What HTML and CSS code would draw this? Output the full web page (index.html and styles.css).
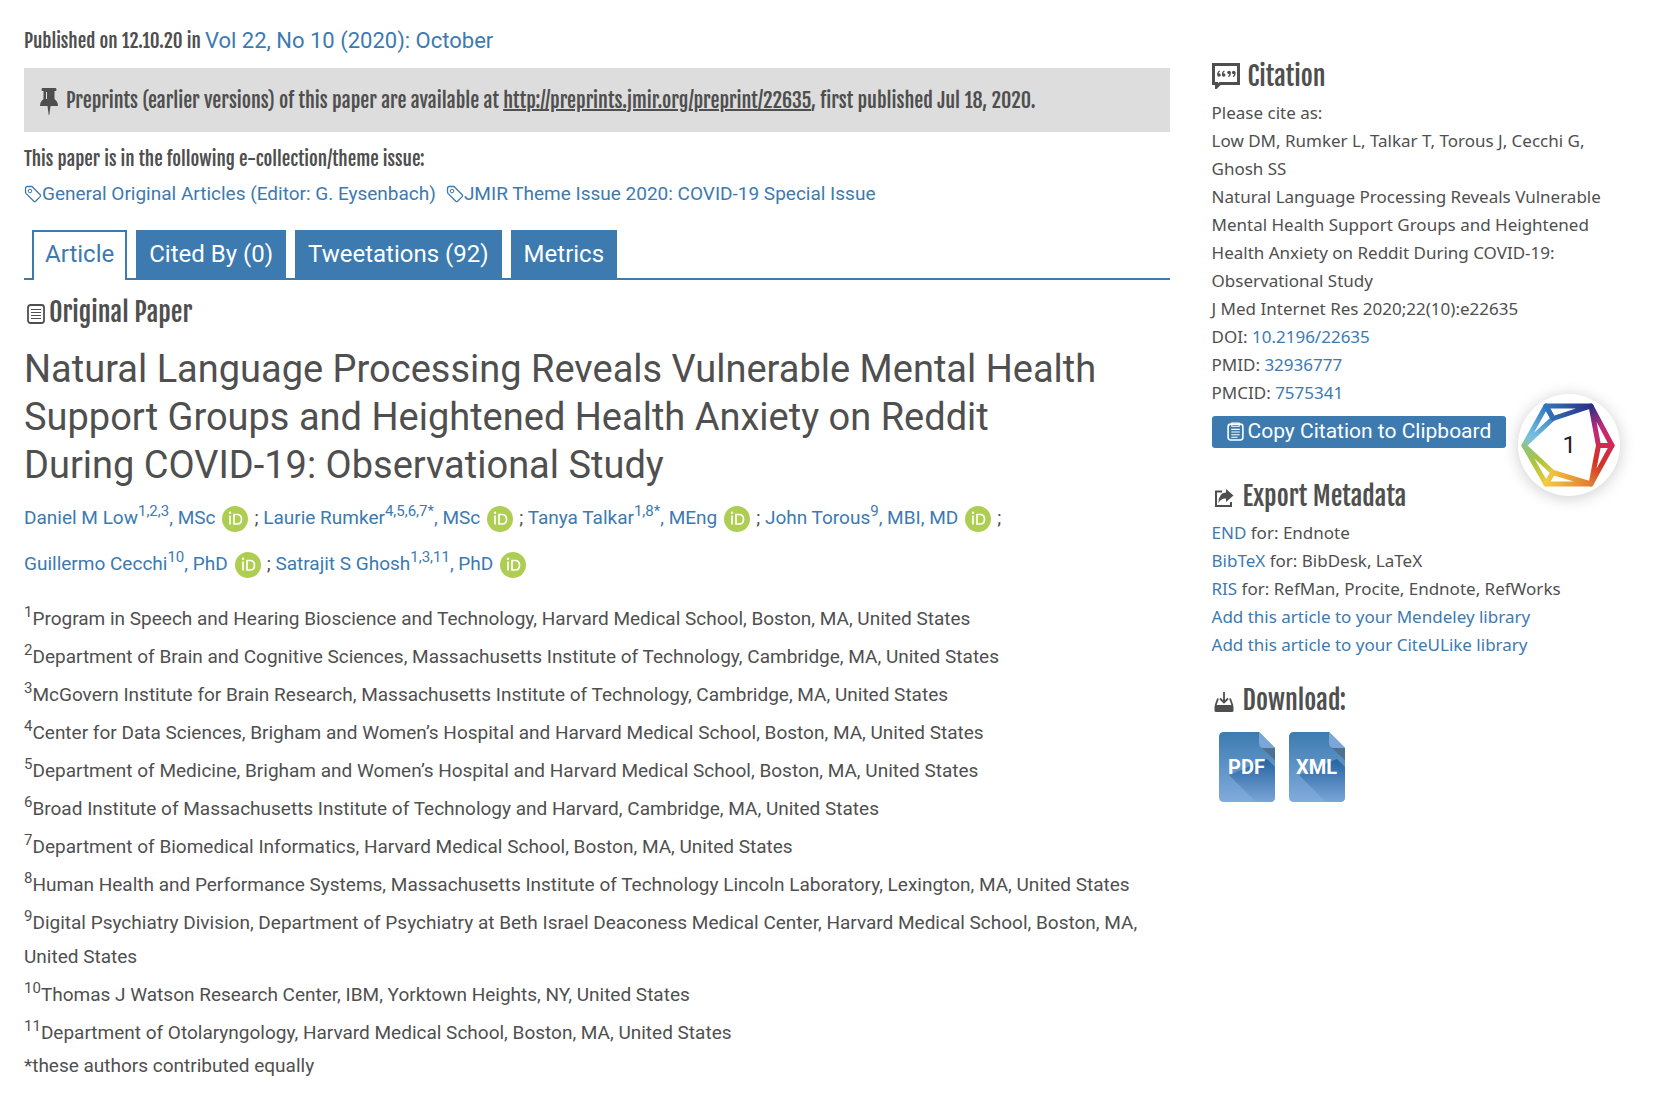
FILE: index.html
```html
<!DOCTYPE html>
<html lang="en">
<head>
<meta charset="utf-8">
<title>Natural Language Processing Reveals Vulnerable Mental Health Support Groups</title>
<link rel="stylesheet" href="styles.css">
</head>
<body>
<svg class="defs" width="0" height="0" aria-hidden="true">
  <symbol id="tag" viewBox="0 0 18 18">
    <path d="M1.500 6.500V3.500Q1.500 1.500 3.500 1.500H8L16.200 9.800Q17 10.700 16.200 11.600L11.600 16.200Q10.700 17 9.800 16.200L2.200 8.600Q1.500 7.800 1.500 6.500Z" fill="none" stroke="currentColor" stroke-width="1.300"/>
    <circle cx="6" cy="6" r="1.800" fill="none" stroke="currentColor"/>
  </symbol>
  <symbol id="paper" viewBox="0 0 18 20">
    <rect x="1" y="1" width="16" height="18" rx="2.500" fill="none" stroke="currentColor" stroke-width="1.800"/>
    <path d="M4 5.500H14M4 8.500H14M4 11.500H14M4 14.500H14" stroke="currentColor" stroke-width="1.200"/>
  </symbol>
  <symbol id="orcid" viewBox="0 0 26 26">
    <circle cx="13" cy="13" r="13" fill="#aecd53"/>
    <path d="M8 9.500V18.500M12 8.500H15Q19.500 8.500 19.500 13.200Q19.500 18 15 18H12Z" fill="none" stroke="#fff" stroke-width="1.700"/>
    <circle cx="8" cy="6.800" r="1.200" fill="#fff"/>
  </symbol>
</svg>
<div class="page">
  <main class="main">
    <p class="published">Published on 12.10.20 in <a href="#">Vol 22, No 10 (2020): October</a></p>
    <div class="preprint">
      <svg class="pin" viewBox="0 0 18 27" aria-hidden="true"><path d="M2.500 0H15.500Q16.500 0 16.500 1.500T15.500 3H14.500V11Q18 13.500 18 18H0Q0 13.500 3.500 11V3H2.500Q1.500 3 1.500 1.500T2.500 0Z" fill="currentColor"/><path d="M7.500 18H10.500L9.300 27H8.700Z" fill="currentColor"/><path d="M6.500 4V11" stroke="#ddd"/></svg>
      <p>Preprints (earlier versions) of this paper are available at <a href="#">http://preprints.jmir.org/preprint/22635</a>, first published Jul 18, 2020.</p>
    </div>
    <p class="collection-label">This paper is in the following e-collection/theme issue:</p>
    <div class="collections">
      <a href="#"><svg class="tag"><use href="#tag"/></svg>General Original Articles (Editor: G. Eysenbach)</a>
      <a href="#"><svg class="tag"><use href="#tag"/></svg>JMIR Theme Issue 2020: COVID-19 Special Issue</a>
    </div>
    <nav class="tabs">
      <a class="tab active" href="#">Article</a>
      <a class="tab" href="#">Cited By (0)</a>
      <a class="tab" href="#">Tweetations (92)</a>
      <a class="tab" href="#">Metrics</a>
    </nav>
    <h2 class="kind"><svg class="paper"><use href="#paper"/></svg>Original Paper</h2>
    <h1>Natural Language Processing Reveals Vulnerable Mental Health Support Groups and Heightened Health Anxiety on Reddit During COVID-19: Observational Study</h1>
    <p class="authors">
      <span class="author"><a href="#">Daniel M Low<sup>1,2,3</sup>, MSc</a><a class="orcid" href="#" aria-label="ORCID"><svg><use href="#orcid"/></svg></a>;</span>
      <span class="author"><a href="#">Laurie Rumker<sup>4,5,6,7*</sup>, MSc</a><a class="orcid" href="#" aria-label="ORCID"><svg><use href="#orcid"/></svg></a>;</span>
      <span class="author"><a href="#">Tanya Talkar<sup>1,8*</sup>, MEng</a><a class="orcid" href="#" aria-label="ORCID"><svg><use href="#orcid"/></svg></a>;</span>
      <span class="author"><a href="#">John Torous<sup>9</sup>, MBI, MD</a><a class="orcid" href="#" aria-label="ORCID"><svg><use href="#orcid"/></svg></a>;</span>
      <span class="author"><a href="#">Guillermo Cecchi<sup>10</sup>, PhD</a><a class="orcid" href="#" aria-label="ORCID"><svg><use href="#orcid"/></svg></a>;</span>
      <span class="author"><a href="#">Satrajit S Ghosh<sup>1,3,11</sup>, PhD</a><a class="orcid" href="#" aria-label="ORCID"><svg><use href="#orcid"/></svg></a></span>
    </p>
    <ul class="affiliations">
      <li><sup>1</sup>Program in Speech and Hearing Bioscience and Technology, Harvard Medical School, Boston, MA, United States</li>
      <li><sup>2</sup>Department of Brain and Cognitive Sciences, Massachusetts Institute of Technology, Cambridge, MA, United States</li>
      <li><sup>3</sup>McGovern Institute for Brain Research, Massachusetts Institute of Technology, Cambridge, MA, United States</li>
      <li><sup>4</sup>Center for Data Sciences, Brigham and Women’s Hospital and Harvard Medical School, Boston, MA, United States</li>
      <li><sup>5</sup>Department of Medicine, Brigham and Women’s Hospital and Harvard Medical School, Boston, MA, United States</li>
      <li><sup>6</sup>Broad Institute of Massachusetts Institute of Technology and Harvard, Cambridge, MA, United States</li>
      <li><sup>7</sup>Department of Biomedical Informatics, Harvard Medical School, Boston, MA, United States</li>
      <li><sup>8</sup>Human Health and Performance Systems, Massachusetts Institute of Technology Lincoln Laboratory, Lexington, MA, United States</li>
      <li><sup>9</sup>Digital Psychiatry Division, Department of Psychiatry at Beth Israel Deaconess Medical Center, Harvard Medical School, Boston, MA, United States</li>
      <li><sup>10</sup>Thomas J Watson Research Center, IBM, Yorktown Heights, NY, United States</li>
      <li><sup>11</sup>Department of Otolaryngology, Harvard Medical School, Boston, MA, United States</li>
    </ul>
    <p class="note">*these authors contributed equally</p>
  </main>
  <aside class="side">
    <section>
      <h2><svg class="quote" viewBox="0 0 28 26" aria-hidden="true"><path d="M1.500 1.500H26.500V20.500H8L4.500 24V20.500H1.500Z" fill="none" stroke="currentColor" stroke-width="3"/><g fill="currentColor"><circle cx="7" cy="12" r="1.800"/><circle cx="11.700" cy="12" r="1.800"/><circle cx="17" cy="9.500" r="1.800"/><circle cx="21.700" cy="9.500" r="1.800"/></g><path d="M5.900 12Q5.500 9 7.700 8M10.600 12Q10.200 9 12.400 8M18.100 9.500Q18.500 12.500 16.300 13.500M22.800 9.500Q23.200 12.500 21 13.500" fill="none" stroke="currentColor" stroke-width="1.300"/></svg>Citation</h2>
      <p>Please cite as:</p>
      <p>Low DM, Rumker L, Talkar T, Torous J, Cecchi G, Ghosh SS</p>
      <p>Natural Language Processing Reveals Vulnerable Mental Health Support Groups and Heightened Health Anxiety on Reddit During COVID-19: Observational Study</p>
      <p>J Med Internet Res 2020;22(10):e22635</p>
      <p>DOI: <a href="#">10.2196/22635</a></p>
      <p>PMID: <a href="#">32936777</a></p>
      <p>PMCID: <a href="#">7575341</a></p>
      <div class="copy">
        <button type="button"><svg class="clip" viewBox="0 0 16 18" aria-hidden="true"><rect x="1" y="2" width="14" height="15" rx="2.500" fill="none" stroke="currentColor" stroke-width="1.500"/><path d="M4.500 1H11.500V4H4.500Z" fill="none" stroke="currentColor"/><path d="M4 7H12M4 9.500H12M4 12H12M4 14.500H10" stroke="currentColor"/></svg>Copy Citation to Clipboard</button>
        <a class="badge" href="#">
          <svg viewBox="0 0 102 102" aria-hidden="true">
            <defs>
              <linearGradient id="g1" gradientUnits="userSpaceOnUse" x1="28" y1="12" x2="73" y2="12"><stop offset="0" stop-color="#3077bd"/><stop offset="1" stop-color="#2b2f83"/></linearGradient>
              <linearGradient id="g2" gradientUnits="userSpaceOnUse" x1="28" y1="12" x2="6" y2="52"><stop offset="0" stop-color="#3077bd"/><stop offset=".7" stop-color="#72bde5"/><stop offset="1" stop-color="#8cc6a5"/></linearGradient>
              <linearGradient id="g3" gradientUnits="userSpaceOnUse" x1="6" y1="52" x2="28" y2="90"><stop offset="0" stop-color="#8dc383"/><stop offset=".45" stop-color="#a9c53f"/><stop offset="1" stop-color="#f2cb3f"/></linearGradient>
              <linearGradient id="g4" gradientUnits="userSpaceOnUse" x1="28" y1="90" x2="73" y2="90"><stop offset="0" stop-color="#f4cb40"/><stop offset="1" stop-color="#e07c31"/></linearGradient>
              <linearGradient id="g5" gradientUnits="userSpaceOnUse" x1="73" y1="90" x2="94" y2="52"><stop offset="0" stop-color="#e07c31"/><stop offset=".5" stop-color="#d33228"/><stop offset="1" stop-color="#cf2a55"/></linearGradient>
              <linearGradient id="g6" gradientUnits="userSpaceOnUse" x1="73" y1="12" x2="94" y2="52"><stop offset="0" stop-color="#2b2f83"/><stop offset=".5" stop-color="#bd2a7b"/><stop offset="1" stop-color="#cf2a55"/></linearGradient>
            </defs>
            <g fill="none" stroke-width="5" stroke-linejoin="round" stroke-linecap="round">
              <path d="M28 12L35 24.500L6 51.500Z" stroke="url(#g2)"/>
              <path d="M28 90L35 78.500L6 51.500Z" stroke="url(#g3)"/>
              <path d="M73 12L80.500 51.500H94Z" stroke="url(#g6)"/>
              <path d="M94 51.500H80.500L73 90Z" stroke="url(#g5)"/>
              <path d="M28 90L35 78.500L73 90Z" stroke="url(#g4)"/>
              <path d="M28 12L35 24.500L73 12Z" stroke="url(#g1)"/>
            </g>
          </svg>
          <span>1</span>
        </a>
      </div>
    </section>
    <section>
      <h2><svg class="small" viewBox="0 0 20 20" aria-hidden="true"><path d="M8 3.500H2V18H17V14" fill="none" stroke="currentColor" stroke-width="2"/><path d="M12 1L19.500 7.500L12 14V10.500Q7 10 4.500 15Q4.500 5 12 4.500Z" fill="currentColor"/></svg>Export Metadata</h2>
      <p><a href="#">END</a> for: Endnote</p>
      <p><a href="#">BibTeX</a> for: BibDesk, LaTeX</p>
      <p><a href="#">RIS</a> for: RefMan, Procite, Endnote, RefWorks</p>
      <p><a href="#">Add this article to your Mendeley library</a></p>
      <p><a href="#">Add this article to your CiteULike library</a></p>
    </section>
    <section>
      <h2><svg class="small" viewBox="0 0 20 20" aria-hidden="true"><path d="M4 6.500L1.500 13.500M16 6.500L18.500 13.500M10 0V10M6 6.500L10 10.500L14 6.500" fill="none" stroke="currentColor" stroke-width="1.800"/><rect x="0.500" y="13" width="19" height="7" rx="1.500" fill="currentColor"/></svg>Download:</h2>
      <div class="files">
        <a href="#" class="file"><svg viewBox="0 0 56 70" aria-hidden="true"><defs><linearGradient id="fb" x1="0" y1="0" x2="0" y2="1"><stop offset="0" stop-color="#3c7bb0"/><stop offset="1" stop-color="#82abdc"/></linearGradient><linearGradient id="fs" x1="0" y1="0" x2="0" y2="1"><stop offset="0" stop-color="#2363a1"/><stop offset="1" stop-color="#7ba5d7"/></linearGradient></defs><path d="M5 0H40L56 16V65Q56 70 51 70H5Q0 70 0 65V5Q0 0 5 0Z" fill="url(#fb)"/><path d="M10 43L48 27L56 35V65Q56 70 51 70H37Z" fill="url(#fs)"/><path d="M40 0L56 16H45Q40 16 40 11Z" fill="#7ba6d8"/><path d="M43 16H56V28Z" fill="#50708f"/></svg><span>PDF</span></a>
        <a href="#" class="file"><svg viewBox="0 0 56 70" aria-hidden="true"><path d="M5 0H40L56 16V65Q56 70 51 70H5Q0 70 0 65V5Q0 0 5 0Z" fill="url(#fb)"/><path d="M10 43L48 27L56 35V65Q56 70 51 70H37Z" fill="url(#fs)"/><path d="M40 0L56 16H45Q40 16 40 11Z" fill="#7ba6d8"/><path d="M43 16H56V28Z" fill="#50708f"/></svg><span>XML</span></a>
      </div>
    </section>
  </aside>
</div>
</body>
</html>
```
FILE: styles.css
```css
* { box-sizing: border-box; }
body {
  margin: 0;
  background: #fff;
  color: #4f4f4f;
  font-family: Roboto, "Liberation Sans", sans-serif;
  font-size: 19px;
}
p, h1, h2, ul { margin: 0; padding: 0; font-weight: 400; }
a { color: #3c7ab0; text-decoration: none; }
svg { display: block; flex: none; }
.defs { position: absolute; }

.page {
  display: grid;
  grid-template-columns: minmax(0, 1fr) 27%;
  gap: 40px;
  padding: 21px 24px 0;
}

.published, .preprint, .collection-label, h2 {
  font-family: "Fjalla One", "Roboto Condensed", "Liberation Sans Narrow", sans-serif;
}
.published { line-height: 40px; }
.published a { font-family: Roboto, sans-serif; font-size: 22px; }
.preprint {
  display: flex;
  align-items: center;
  gap: 8px;
  margin-top: 7px;
  padding: 17px 16px 15px;
  background: #ddd;
  font-size: 20px;
  line-height: 32px;
}
.preprint a { color: inherit; text-decoration: underline; }
.pin { width: 18px; height: 27px; }
.collection-label { margin-top: 13px; line-height: 28px; }
.collections { display: flex; gap: 10px; margin-top: 7px; line-height: 28px; }
.collections a { display: flex; align-items: center; }
.tag { width: 18px; height: 18px; }

.tabs {
  display: flex;
  gap: 9px;
  margin-top: 22px;
  padding-left: 8px;
  border-bottom: 2px solid #3c7ab0;
}
.tab {
  padding: 0 11px 2px;
  border: 2px solid #3c7ab0;
  border-bottom: 0;
  background: #3c7ab0;
  color: #fff;
  font-size: 24px;
  line-height: 44px;
}
.tab.active { margin-bottom: -2px; background: #fff; color: #3c7ab0; }

h2 { display: flex; align-items: center; font-size: 26px; line-height: 32px; }
.kind { gap: 4px; margin-top: 16px; padding-left: 3px; }
.paper { width: 18px; height: 20px; margin-top: 4px; }
h1 { margin-top: 17px; padding-right: 68px; font-size: 38px; line-height: 48px; }

.authors { margin-top: 6px; line-height: 46px; }
.author { white-space: nowrap; }
sup { font-size: 15px; line-height: 0; vertical-align: 8px; }
.orcid { display: inline-block; margin: 0 6px 0 7px; vertical-align: middle; }
.orcid svg { width: 26px; height: 26px; }

.affiliations { margin-top: 15px; list-style: none; line-height: 34px; }
.affiliations li { margin-bottom: 4px; }
.note { line-height: 24px; }

.side {
  padding: 39px 36px 0 2px;
  font-family: "Noto Sans", sans-serif;
  font-size: 17px;
  line-height: 28px;
}
.side h2 { gap: 8px; margin-bottom: 7px; }
.quote { width: 28px; height: 26px; }
.small { width: 20px; height: 20px; margin: 4px 1px 0 2px; }
.copy { position: relative; width: max-content; margin: 9px 0 32px; }
.copy button {
  display: flex;
  align-items: center;
  gap: 4px;
  padding: 0 15px 1px;
  border: 0;
  border-radius: 3px;
  background: #3c7ab0;
  color: #fff;
  font-family: Roboto, sans-serif;
  font-size: 21px;
  line-height: 31px;
}
.clip { width: 17px; height: 19px; }
.badge {
  position: absolute;
  top: -22px;
  left: calc(100% + 12px);
  display: grid;
  place-items: center;
  width: 102px;
  height: 102px;
  border-radius: 50%;
  background: #fff;
  box-shadow: 0 2px 16px #0003;
  color: #222;
  font-family: Roboto, sans-serif;
  font-size: 24px;
}
.badge svg, .badge span { grid-area: 1 / 1; }
.badge svg { width: 102px; height: 102px; }
section + section { margin-top: 25px; }
.files { display: flex; gap: 14px; padding: 9px 7px; }
.file { display: grid; place-items: center; color: #fff; font: 700 20px Roboto, sans-serif; }
.file svg, .file span { grid-area: 1 / 1; }
.file svg { width: 56px; height: 70px; }
```
